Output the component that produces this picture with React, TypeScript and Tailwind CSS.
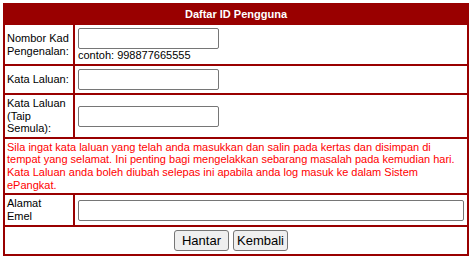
import React from 'react';

const inputCls =
  'h-[21px] border border-[#767676] rounded-[2px] bg-white px-[2px] text-[13px] outline-none';

const btnCls =
  'h-[21px] w-[55px] px-0 border border-[#767676] rounded-[3px] bg-[#efefef] text-[13px] text-black leading-none';

const Label: React.FC<{ children: React.ReactNode }> = ({ children }) => (
  <div className="bg-white flex items-center pl-[2px] pr-[2px] text-black">
    <span>{children}</span>
  </div>
);

export default function App() {
  return (
    <div className="p-[3px] font-['Liberation_Sans',Arial,sans-serif] text-[11px] leading-[12.6px]">
      <div className="w-[466px] bg-[#990000] p-[2px] flex flex-col gap-[2px]">
        <div className="h-[18px] flex items-center justify-center text-white font-bold">
          Daftar ID Pengguna
        </div>

        <div className="grid grid-cols-[68px_1fr] gap-[2px] h-[39px]">
          <Label>Nombor Kad Pengenalan:</Label>
          <div className="bg-white flex flex-col justify-center pl-[3px]">
            <input className={`${inputCls} w-[141px]`} />
            <span className="text-black">contoh: 998877665555</span>
          </div>
        </div>

        <div className="grid grid-cols-[68px_1fr] gap-[2px] h-[27px]">
          <Label>Kata Laluan:</Label>
          <div className="bg-white flex items-center pl-[3px]">
            <input type="password" className={`${inputCls} w-[141px]`} />
          </div>
        </div>

        <div className="grid grid-cols-[68px_1fr] gap-[2px] h-[42px]">
          <Label>Kata Laluan (Taip Semula):</Label>
          <div className="bg-white flex items-center pl-[3px]">
            <input type="password" className={`${inputCls} w-[141px]`} />
          </div>
        </div>

        <div className="bg-white h-[54px] flex items-center px-[2px] text-[#ff0000]">
          <p>
            Sila ingat kata laluan yang telah anda masukkan dan salin pada kertas dan disimpan di
            tempat yang selamat. Ini penting bagi mengelakkan sebarang masalah pada kemudian hari.
            Kata Laluan anda boleh diubah selepas ini apabila anda log masuk ke dalam Sistem
            ePangkat.
          </p>
        </div>

        <div className="grid grid-cols-[68px_1fr] gap-[2px] h-[30px]">
          <Label>
            Alamat
            <br />
            Emel
          </Label>
          <div className="bg-white flex items-center pl-[3px] pr-[3px]">
            <input className={`${inputCls} w-full`} />
          </div>
        </div>

        <div className="bg-white h-[27px] flex items-center justify-center gap-[4px] pr-[10px]">
          <button className={btnCls}>Hantar</button>
          <button className={btnCls}>Kembali</button>
        </div>
      </div>
    </div>
  );
}
